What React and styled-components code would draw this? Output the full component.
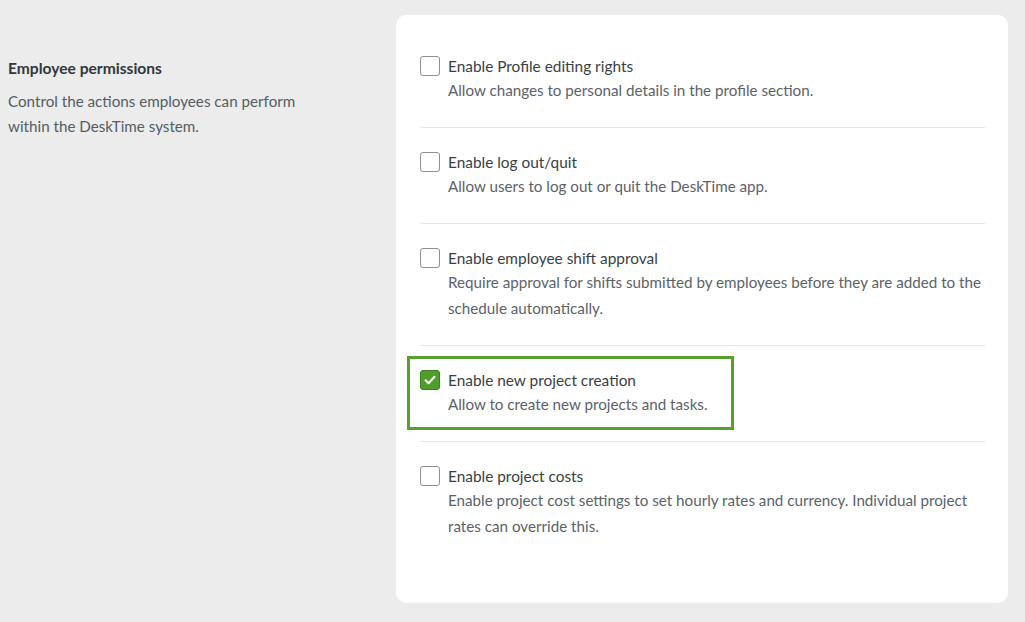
import React from "react";
import styled, { createGlobalStyle } from "styled-components";

const Global = createGlobalStyle`
  html, body { margin: 0; padding: 0; background: #ebeceb; }
  body { font-family: "Lato", "Noto Sans", sans-serif; -webkit-font-smoothing: antialiased; }
  * { box-sizing: border-box; }
`;

const Page = styled.div`
  display: flex;
  align-items: flex-start;
  min-height: 622px;
  padding: 15px 17px 18px 8px;
`;

const Intro = styled.div`
  width: 388px;
  flex-shrink: 0;
  padding-top: 41px;
`;

const IntroTitle = styled.h2`
  margin: 0;
  font-size: 15.6px;
  line-height: 24px;
  font-weight: 700;
  color: #33383d;
`;

const IntroText = styled.p`
  margin: 9px 0 0;
  width: 300px;
  font-size: 15.2px;
  line-height: 25px;
  color: #555c63;
`;

const Card = styled.div`
  flex: 1;
  background: #ffffff;
  border-radius: 10px;
  padding: 17px 23px 40px 24px;
`;

const Row = styled.div`
  padding: 23px 0 24px;
  border-bottom: 1px solid #e6e7e8;
  &:last-child {
    border-bottom: none;
  }
`;

const Option = styled.label`
  position: relative;
  display: flex;
  align-items: flex-start;
  gap: 8px;
  cursor: pointer;
  ${(p) =>
    p.$focused
      ? `
    &::after {
      content: "";
      position: absolute;
      top: -13px;
      left: -13px;
      width: 321px;
      bottom: -13px;
      border: 3px solid #58a02b;
      pointer-events: none;
    }
  `
      : ""}
`;

const Box = styled.span`
  flex-shrink: 0;
  width: 20px;
  height: 20px;
  margin-top: 1px;
  border-radius: 3px;
  border: 1px solid ${(p) => (p.$checked ? "#3d7f21" : "#8c8f93")};
  background: ${(p) => (p.$checked ? "#4f9e2c" : "#ffffff")};
  display: flex;
  align-items: center;
  justify-content: center;
`;

const Texts = styled.div`
  display: flex;
  flex-direction: column;
`;

const Title = styled.span`
  font-size: 15.4px;
  line-height: 22px;
  color: #3a3f45;
`;

const Desc = styled.span`
  font-size: 15.2px;
  line-height: 26px;
  color: #5b6269;
`;

const options = [
  {
    title: "Enable Profile editing rights",
    desc: "Allow changes to personal details in the profile section.",
  },
  {
    title: "Enable log out/quit",
    desc: "Allow users to log out or quit the DeskTime app.",
  },
  {
    title: "Enable employee shift approval",
    desc: "Require approval for shifts submitted by employees before they are added to the schedule automatically.",
  },
  {
    title: "Enable new project creation",
    desc: "Allow to create new projects and tasks.",
    checked: true,
    focused: true,
  },
  {
    title: "Enable project costs",
    desc: "Enable project cost settings to set hourly rates and currency. Individual project rates can override this.",
  },
];

const Check = () => (
  <svg width="14" height="14" viewBox="0 0 14 14" fill="none">
    <path d="M2.5 7.2 L5.6 10.2 L11.5 3.8" stroke="#fff" strokeWidth="2" strokeLinecap="round" strokeLinejoin="round" />
  </svg>
);

export default function App() {
  return (
    <>
      <Global />
      <Page>
        <Intro>
          <IntroTitle>Employee permissions</IntroTitle>
          <IntroText>Control the actions employees can perform within the DeskTime system.</IntroText>
        </Intro>
        <Card>
          {options.map((o) => (
            <Row key={o.title}>
              <Option $focused={o.focused}>
                <Box $checked={o.checked}>{o.checked && <Check />}</Box>
                <Texts>
                  <Title>{o.title}</Title>
                  <Desc>{o.desc}</Desc>
                </Texts>
              </Option>
            </Row>
          ))}
        </Card>
      </Page>
    </>
  );
}
